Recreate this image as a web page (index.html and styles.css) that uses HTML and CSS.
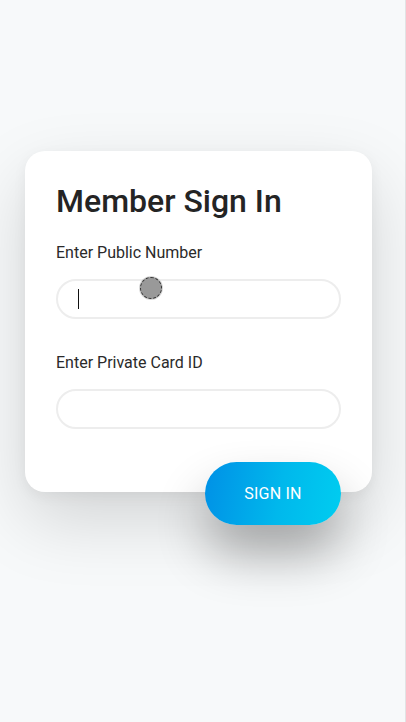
FILE: index.html
```html
<!DOCTYPE html>
<html lang="en">
<head>
<meta charset="utf-8">
<title>Member Sign In</title>
<link rel="stylesheet" href="styles.css">
</head>
<body>
<div class="page">
  <form class="card">
    <h1 class="title">Member Sign In</h1>
    <label class="label" for="pub">Enter Public Number</label>
    <div class="field">
      <input class="input" id="pub" type="text">
      <span class="caret"></span>
      <span class="touch"></span>
    </div>
    <label class="label label-second" for="priv">Enter Private Card ID</label>
    <div class="field">
      <input class="input" id="priv" type="password">
    </div>
    <button class="btn" type="button">SIGN IN</button>
  </form>
</div>
</body>
</html>
```

FILE: styles.css
```css
* { box-sizing: border-box; }
html, body { margin: 0; padding: 0; }
body {
  background: #f7f9fa;
  font-family: Roboto, "Liberation Sans", sans-serif;
  color: #262626;
}
.page {
  width: 406px;
  min-height: 722px;
  padding-top: 151px;
  border-right: 1px solid #e2e3e4;
  background: #f7f9fa;
}
.card {
  margin-left: 25px;
  width: 347px;
  background: #fff;
  border-radius: 20px;
  padding: 32px 31px 0 31px;
  display: flex;
  flex-direction: column;
  box-shadow: 0 28px 70px rgba(0,0,0,0.15), 0 4px 14px rgba(0,0,0,0.05);
}
.card > * { flex-shrink: 0; }
.title {
  margin: 0;
  font-size: 32px;
  font-weight: 500;
  line-height: 37px;
  color: #242424;
}
.label {
  display: block;
  margin-top: 23px;
  font-size: 16px;
  line-height: 19px;
  color: #2a2a2a;
}
.label-second { margin-top: 34px; }
.field {
  position: relative;
  margin-top: 17px;
}
.input {
  display: block;
  width: 285px;
  height: 40px;
  border: 2px solid #ededed;
  border-radius: 20px;
  background: #fff;
  padding: 0 20px;
  font: inherit;
  outline: none;
}
.caret {
  position: absolute;
  left: 22px;
  top: 10px;
  width: 1px;
  height: 20px;
  background: #111;
}
.touch {
  position: absolute;
  left: 84px;
  top: -2px;
  width: 22px;
  height: 22px;
  border-radius: 50%;
  background: #999;
  border: 1px dashed #333;
  box-shadow: 0 0 0 1px rgba(200,200,200,0.7);
}
.btn {
  margin-top: 33px;
  margin-bottom: -33px;
  align-self: flex-end;
  width: 136px;
  height: 63px;
  border: none;
  border-radius: 32px;
  background: linear-gradient(100deg, #0090e6 0%, #00b8ec 55%, #00cdf0 100%);
  color: #fff;
  font-family: Roboto, "Liberation Sans", sans-serif;
  font-size: 16px;
  letter-spacing: 0.2px;
  box-shadow: 0 30px 50px rgba(0,0,0,0.3);
  cursor: pointer;
}
```
